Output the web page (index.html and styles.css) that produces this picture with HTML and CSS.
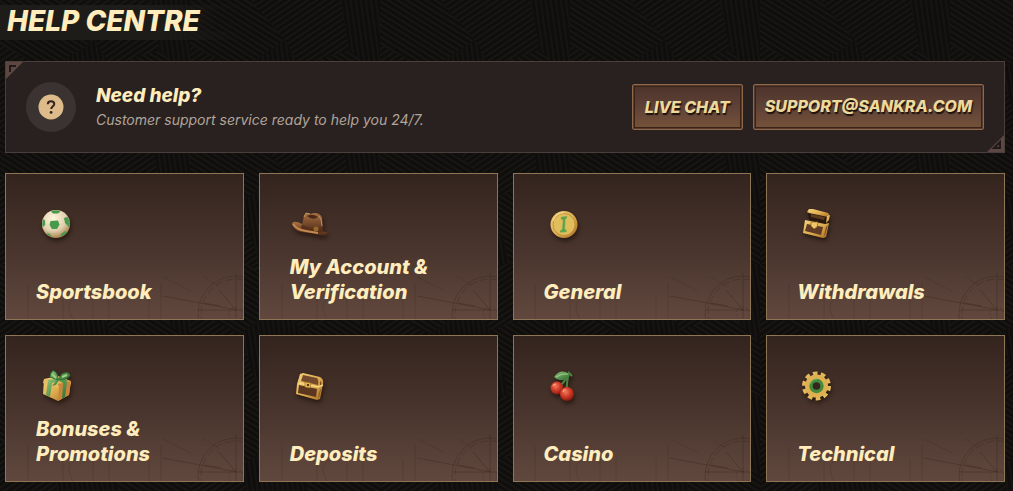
FILE: index.html
```html
<!DOCTYPE html>
<html lang="en">
  <head>
    <meta charset="UTF-8" />
    <meta name="viewport" content="width=device-width, initial-scale=1.0" />
    <title>Help Centre</title>
    <link rel="stylesheet" href="styles.css">
  </head>
  <body>
    <!-- shared gradients -->
    <svg class="defs" aria-hidden="true">
      <defs>
        <radialGradient id="ivory" cx=".4" cy=".3" r=".75">
          <stop offset="0" stop-color="#fff6dc" />
          <stop offset=".6" stop-color="#e0cfae" />
          <stop offset="1" stop-color="#a0763f" />
        </radialGradient>
        <linearGradient id="gold" x1="0" y1="0" x2="1" y2="1">
          <stop offset="0" stop-color="#f3d27c" />
          <stop offset=".5" stop-color="#e0ae50" />
          <stop offset="1" stop-color="#a86c25" />
        </linearGradient>
        <linearGradient id="leather" x1="0" y1="0" x2="0" y2="1">
          <stop offset="0" stop-color="#a87042" />
          <stop offset="1" stop-color="#4e2b18" />
        </linearGradient>
        <radialGradient id="cherry" cx=".4" cy=".35" r=".7">
          <stop offset="0" stop-color="#f47a5b" />
          <stop offset=".5" stop-color="#cf3a26" />
          <stop offset="1" stop-color="#7c1710" />
        </radialGradient>
        <linearGradient id="leaf" x1="0" y1="0" x2="1" y2="1">
          <stop offset="0" stop-color="#8cc476" />
          <stop offset="1" stop-color="#2d6a32" />
        </linearGradient>
      </defs>
    </svg>

    <main class="help">
      <h1 class="help-title">Help Centre</h1>

      <section class="banner">
        <svg class="corner corner-top" viewBox="0 0 17 17" aria-hidden="true">
          <path d="M0 0H17L0 17Z" fill="#5c4743" />
          <path d="M4 10V4H10" fill="none" stroke="#211917" stroke-width="2" />
        </svg>
        <div class="banner-icon">
          <svg viewBox="0 0 26 26" aria-hidden="true">
            <circle cx="13" cy="13" r="12.5" fill="#debb8a" />
            <path d="M9.8 10.2C9.8 8.3 11.1 7.2 13 7.2C15 7.2 16.3 8.3 16.3 10C16.3 12.2 13.2 12.3 13.2 15" fill="none" stroke="#30231d" stroke-width="2" />
            <circle cx="13.1" cy="18.4" r="1.4" fill="#30231d" />
          </svg>
        </div>
        <div class="banner-text">
          <h2>Need help?</h2>
          <p>Customer support service ready to help you 24/7.</p>
        </div>
        <div class="banner-actions">
          <button type="button" class="btn">Live chat</button>
          <a class="btn" href="mailto:support@sankra.com">support@sankra.com</a>
        </div>
        <svg class="corner corner-bottom" viewBox="0 0 17 17" aria-hidden="true">
          <path d="M0 0H17L0 17Z" fill="#5c4743" />
          <path d="M4 10V4H10Z" fill="none" stroke="#211917" stroke-width="2" />
        </svg>
      </section>

      <nav class="topics" aria-label="Help topics">
        <a class="card" href="#sportsbook">
          <svg class="card-icon" viewBox="0 0 40 40" aria-hidden="true">
            <circle cx="20" cy="20" r="14" fill="url(#ivory)" />
            <g fill="#479a4c">
              <path d="M14.5 17L22 16.5L23.5 20.5L21 25H16L13.5 21Z" />
              <path d="M15 7.4Q20 5 24.5 7.2L22 9.4H17Z" />
              <path d="M28 14L31.5 13Q35 19 33 23L29 19Z" />
              <path d="M7.5 15L9 16.5L9.2 21L6.8 23Q5.4 19 7.5 15Z" />
              <path d="M10.5 28.5L14 30L16 33.4Q12 32 10.5 28.5Z" />
              <path d="M25 30L29 27L31 28Q28 32 24.5 33Z" />
            </g>
          </svg>
          <span class="card-title">Sportsbook</span>
        </a>

        <a class="card" href="#account">
          <svg class="card-icon" viewBox="0 0 40 40" aria-hidden="true">
            <path d="M2 19Q5 16 12 20L29 25Q34 29 38 28Q36 33 29 31Q20 29 11 28Q3 26 2 19Z" fill="url(#leather)" />
            <path d="M11 24L14 12Q16 7 20 10Q28 7 32 13L33 28Q22 29 11 24Z" fill="url(#leather)" />
            <path d="M17 12Q22 9 28 13Q23 17 17 12Z" fill="#4a2919" />
            <path d="M12 21Q22 26 33 24V28Q22 29 11 24Z" fill="#563019" />
            <path d="M3 20Q7 26 16 27L28 29" fill="none" stroke="#c48851" stroke-width="2" />
            <path d="M14 13L16 9L20 10M29 12Q32 15 32 22" fill="none" stroke="#c0945a" stroke-width="1" />
            <circle cx="26" cy="25" r="2.5" fill="#98672d" />
          </svg>
          <span class="card-title">My Account &amp; Verification</span>
        </a>

        <a class="card" href="#general">
          <svg class="card-icon" viewBox="0 0 40 40" aria-hidden="true">
            <circle cx="20" cy="20.5" r="13.5" fill="url(#gold)" />
            <circle cx="20" cy="20.5" r="11" fill="#e2bd5b" stroke="#b98b3b" stroke-width=".8" />
            <path d="M17 13L23 12V14L21.5 15L20.8 25L22.5 26V28L16 28.5V26.5L18 25.5L19 16L17 15.5Z" fill="#5ba14a" stroke="#a8bb5b" stroke-width=".5" />
            <path d="M9 17Q12 9 20 8.5" fill="none" stroke="#f7df93" stroke-width="1" />
          </svg>
          <span class="card-title">General</span>
        </a>

        <a class="card" href="#withdrawals">
          <svg class="card-icon" viewBox="0 0 40 40" aria-hidden="true">
            <path d="M11 7L31 12L29 20L12 15Z" fill="#2a170d" />
            <path d="M10 8L12 5L16 5L31 9L33 12L31 13L12 9Z" fill="url(#gold)" />
            <path d="M14 10L28 13L27 16L14 13Z" fill="#5d3b20" />
            <path d="M30 12L33 11L32 16L29 19Z" fill="url(#gold)" />
            <path d="M8 16L28 20L32 19L29 33L26 34L6 29Z" fill="url(#gold)" />
            <path d="M10 20L26 23L24 31L8 27Z" fill="#603b25" />
            <path d="M29 23L31 21L28 31L27 32Z" fill="#77461f" />
            <path d="M14 18H21L20 23L17 25L14 22Z" fill="#f0c767" stroke="#996321" stroke-width=".7" />
          </svg>
          <span class="card-title">Withdrawals</span>
        </a>

        <a class="card" href="#bonuses">
          <svg class="card-icon" viewBox="0 0 40 40" aria-hidden="true">
            <path d="M8 13L22 10L35 15L33 29L22 35L7 28Z" fill="url(#gold)" />
            <path d="M8 13L23 18L35 15V18L23 22L7 17Z" fill="#e9bc67" />
            <path d="M22 18L23 22L22 35L33 29L35 15Z" fill="#c98639" />
            <path d="M12 15L16 17L14 31L10 29ZM27 17L31 16L29 31L26 33ZM11 14L28 12L32 15L28 17L23 15L16 17Z" fill="url(#leaf)" />
            <path d="M22 14L14 11Q15 4 18 5Q22 7 22 14L26 8Q32 5 34 9Q32 14 22 14Z" fill="url(#leaf)" stroke="#347538" />
            <path d="M16 8L20 12M26 11L31 9" stroke="#a2cf84" stroke-width="2" />
            <path d="M21 14L16 20L20 19L23 14L29 18L30 15Z" fill="#4a924a" />
          </svg>
          <span class="card-title">Bonuses &amp; Promotions</span>
        </a>

        <a class="card" href="#deposits">
          <svg class="card-icon" viewBox="0 0 40 40" aria-hidden="true">
            <path d="M7 18L10 8L13 7L30 11Q34 13 33 18L30 33L27 34L6 28Z" fill="url(#gold)" />
            <path d="M13 9L27 12Q29 14 28 19L11 15Z" fill="#744a2e" />
            <path d="M9 19L27 23L26 31L8 27Z" fill="#5b3722" />
            <path d="M30 15Q32 16 31 20L30 20ZM30 24L31 23L29 31L28 32Z" fill="#7a481f" />
            <path d="M8 17L28 21L33 19" fill="none" stroke="#f6d983" stroke-width="1.5" />
            <path d="M15 16L21 17L20 22L15 21Z" fill="#eabf5b" stroke="#a2651e" stroke-width=".7" />
            <circle cx="18" cy="19" r="1.2" fill="#5c3518" />
          </svg>
          <span class="card-title">Deposits</span>
        </a>

        <a class="card" href="#casino">
          <svg class="card-icon" viewBox="0 0 40 40" aria-hidden="true">
            <path d="M13 22Q20 18 25 7M23 26Q22 18 25 7L28 10" fill="none" stroke="#4b833f" stroke-width="2" />
            <path d="M10 11Q17 2 25 8Q23 15 16 14Q13 14 10 11Z" fill="url(#leaf)" />
            <path d="M12 11Q18 7 24 8" fill="none" stroke="#b8d89b" stroke-width=".8" />
            <circle cx="13" cy="22" r="6.5" fill="url(#cherry)" />
            <circle cx="23" cy="28" r="7" fill="url(#cherry)" />
            <path d="M9 20Q10 18 12 18M19 26Q20 23 22 24" fill="none" stroke="#ffae8d" stroke-width="1.2" />
          </svg>
          <span class="card-title">Casino</span>
        </a>

        <a class="card" href="#technical">
          <svg class="card-icon" viewBox="0 0 40 40" aria-hidden="true">
            <circle cx="19.5" cy="20" r="12" fill="none" stroke="#e3b75c" stroke-width="5" stroke-dasharray="4.4 3.14" />
            <circle cx="19.5" cy="20" r="9" fill="none" stroke="#dfb050" stroke-width="5" />
            <circle cx="19.5" cy="20" r="5.5" fill="#38251e" stroke="#438a3d" stroke-width="3.4" />
            <path d="M13 18Q15 13 20 13" fill="none" stroke="#82b665" stroke-width="1" />
          </svg>
          <span class="card-title">Technical</span>
        </a>
      </nav>
    </main>
  </body>
</html>
```
FILE: styles.css
```css
* {
  box-sizing: border-box;
}

body {
  margin: 0;
  background-color: #0f0e0c;
  background-image: url("data:image/svg+xml,%3Csvg xmlns='http://www.w3.org/2000/svg' width='190' height='132'%3E%3Cdefs%3E%3Cpattern id='a' width='5' height='5' patternUnits='userSpaceOnUse' patternTransform='rotate(32)'%3E%3Cpath d='M0 1H5' stroke='%23171612' stroke-width='2'/%3E%3C/pattern%3E%3Cpattern id='b' width='5' height='5' patternUnits='userSpaceOnUse' patternTransform='rotate(-34)'%3E%3Cpath d='M0 1H5' stroke='%23171612' stroke-width='2'/%3E%3C/pattern%3E%3Cpattern id='c' width='5' height='5' patternUnits='userSpaceOnUse' patternTransform='rotate(82)'%3E%3Cpath d='M0 1H5' stroke='%23151411' stroke-width='2'/%3E%3C/pattern%3E%3C/defs%3E%3Cpath fill='url(%23a)' d='M0 0H60L95 40L50 70L0 45ZM110 66L160 50L190 80V132H130Z'/%3E%3Cpath fill='url(%23b)' d='M60 0H150L160 50L110 66L95 40ZM0 45L50 70L70 132H0Z'/%3E%3Cpath fill='url(%23c)' d='M150 0H190V80L160 50ZM95 40L110 66L130 132H70L50 70Z'/%3E%3C/svg%3E");
  color: #ffedbd;
  font-family: Inter, "Open Sans", sans-serif;
  font-style: italic;
  font-feature-settings: "cv11"; /* single-storey a */
}

.defs {
  position: absolute;
  width: 0;
  height: 0;
}

.help {
  padding: 0 8px 9px 5px;
}

h1,
h2,
p {
  margin: 0;
}

.help-title {
  width: fit-content;
  height: 41px;
  margin: 0 0 20px -5px;
  padding: 0 40px 0 7px;
  background:
    linear-gradient(90deg, #1e1c19 60%, transparent) no-repeat 0 5px / 100% 4px,
    linear-gradient(90deg, #1e1c19 80%, transparent) no-repeat 0 9px / 90% 22px,
    linear-gradient(90deg, #1e1c19 65%, transparent) no-repeat 0 31px / 100% 9px;
  font-size: 28px;
  line-height: 42px;
  font-weight: 800;
  text-transform: uppercase;
}

/* Contact banner */
.banner {
  position: relative;
  display: flex;
  align-items: center;
  gap: 20px;
  min-height: 92px;
  margin-bottom: 20px;
  padding: 20px;
  border: 1px solid #4a3f3a;
  background: #292120;
}

.corner {
  position: absolute;
  width: 17px;
  height: 17px;
}

.corner-top {
  top: 0;
  left: 0;
}

.corner-bottom {
  right: 0;
  bottom: 0;
  transform: rotate(180deg);
}

.banner-icon {
  display: flex;
  align-items: center;
  justify-content: center;
  width: 50px;
  height: 50px;
  border-radius: 50%;
  background: #3b3331;
}

.banner-icon svg {
  width: 26px;
  height: 26px;
}

.banner-text {
  flex: 1;
}

.banner-text h2 {
  font-size: 19px;
  line-height: 25px;
  font-weight: 800;
}

.banner-text p {
  color: #b1a59a;
  font-size: 14px;
  line-height: 24px;
}

.banner-actions {
  display: flex;
  gap: 10px;
}

.btn {
  min-width: 111px;
  height: 46px;
  padding: 0 11px;
  border: 1px solid #8f674a;
  border-radius: 2px;
  background: linear-gradient(#4c332b, #614337 55%, #775339);
  box-shadow: inset 0 0 0 1px #583b2a, inset 0 0 0 2px #392319;
  color: #ecd99c;
  font: inherit;
  font-size: 16px;
  line-height: 42px;
  font-weight: 800;
  text-align: center;
  text-decoration: none;
  text-shadow: 1px 2px 1px #1d120c;
  text-transform: uppercase;
  white-space: nowrap;
  cursor: pointer;
}

/* Topic cards */
.topics {
  display: grid;
  grid-template-columns: repeat(4, 1fr);
  gap: 15px;
}

.card {
  display: flex;
  flex-direction: column;
  min-height: 147px;
  padding: 30px 30px 14px;
  border: 1px solid #8d7555;
  background:
    url("data:image/svg+xml,%3Csvg xmlns='http://www.w3.org/2000/svg' width='230' height='60'%3E%3Cg fill='none' stroke='%23352219' stroke-opacity='.3'%3E%3Ccircle cx='223' cy='55' r='38'/%3E%3Ccircle cx='223' cy='55' r='35' stroke-dasharray='8 3'/%3E%3Ccircle cx='223' cy='55' r='7' stroke-dasharray='2 2'/%3E%3Cpath d='M150 37L224 51M185 51H230M223 14V60M206 31L223 51M191 44L208 47' stroke-opacity='.35'/%3E%3Cpath d='M148 24V60M15 25V60M50 40V60M80 38V60M96 38V60M136 38V60M60 60Q50 43 65 38M150 18L178 32M190 17L205 27' stroke-opacity='.2'/%3E%3C/g%3E%3C/svg%3E") no-repeat right bottom,
    linear-gradient(#34241e, #4a362e 55%, #61483e);
  color: #ffedbd;
  text-decoration: none;
}

.card-icon {
  width: 40px;
  height: 40px;
  filter: drop-shadow(1px 3px 2px rgba(20, 10, 5, 0.6));
}

.card-title {
  margin-top: auto;
  font-size: 20px;
  line-height: 25px;
  font-weight: 800;
}
```
